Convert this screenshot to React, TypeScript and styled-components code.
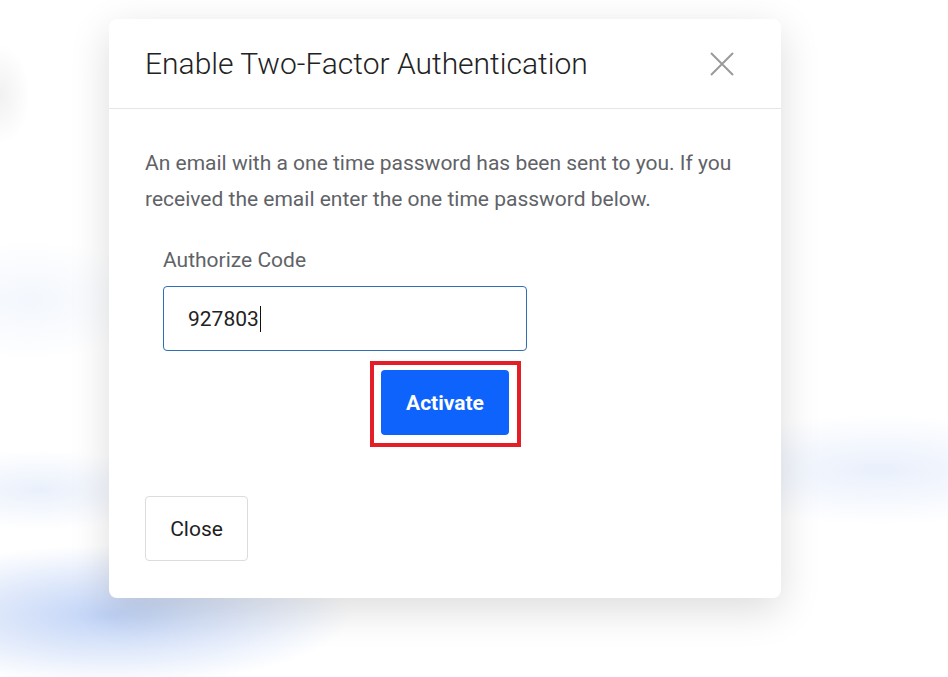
import styled, { createGlobalStyle } from 'styled-components';

const GlobalStyle = createGlobalStyle`
  body {
    margin: 0;
    font-family: Roboto, "Liberation Sans", Arial, sans-serif;
    background: #ffffff;
  }
`;

function App() {
  return (
    <Page>
      <GlobalStyle />
      <Modal>
        <Header>
          <Title>Enable Two-Factor Authentication</Title>
          <CloseIcon aria-label="close">
            <svg width="24" height="24" viewBox="0 0 24 24">
              <path d="M1 1 L23 23 M23 1 L1 23" stroke="#9a9a9a" strokeWidth="2" fill="none" />
            </svg>
          </CloseIcon>
        </Header>
        <Body>
          <Message>
            An email with a one time password has been sent to you. If you received the email enter the one time password
            below.
          </Message>
          <Field>
            <Label>Authorize Code</Label>
            <CodeBox>
              927803
              <Caret />
            </CodeBox>
            <ActionRow>
              <Highlight>
                <PrimaryButton>Activate</PrimaryButton>
              </Highlight>
            </ActionRow>
          </Field>
          <Footer>
            <SecondaryButton>Close</SecondaryButton>
          </Footer>
        </Body>
      </Modal>
    </Page>
  );
}

export default App;

const Page = styled.div`
  width: 948px;
  height: 677px;
  box-sizing: border-box;
  padding: 19px 0 0 109px;
  overflow: hidden;
  background:
    radial-gradient(ellipse 240px 70px at 110px 615px, rgba(188, 208, 246, 0.95), rgba(188, 208, 246, 0) 100%),
    radial-gradient(ellipse 130px 40px at 40px 490px, rgba(225, 234, 250, 0.7), rgba(225, 234, 250, 0) 100%),
    radial-gradient(ellipse 200px 55px at 880px 470px, rgba(228, 236, 251, 0.8), rgba(228, 236, 251, 0) 100%),
    radial-gradient(ellipse 120px 60px at 30px 300px, rgba(235, 241, 251, 0.6), rgba(235, 241, 251, 0) 100%),
    radial-gradient(ellipse 30px 50px at 0px 95px, rgba(215, 215, 215, 0.35), rgba(215, 215, 215, 0) 100%),
    #ffffff;
`;

const Modal = styled.div`
  width: 672px;
  height: 579px;
  display: flex;
  flex-direction: column;
  background: #ffffff;
  border-radius: 8px;
  box-shadow: 0 12px 40px rgba(0, 0, 0, 0.14);
`;

const Header = styled.div`
  height: 90px;
  box-sizing: border-box;
  padding: 0 47px 0 36px;
  display: flex;
  align-items: center;
  justify-content: space-between;
  border-bottom: 1px solid #e6e6e6;
`;

const Title = styled.h2`
  margin: 0;
  font-size: 30px;
  font-weight: 300;
  color: #222222;
`;

const CloseIcon = styled.button`
  width: 24px;
  height: 24px;
  padding: 0;
  border: none;
  background: none;
  display: flex;
  cursor: pointer;
`;

const Body = styled.div`
  flex: 1;
  padding: 36px 36px 0 36px;
  display: flex;
  flex-direction: column;
`;

const Message = styled.p`
  margin: 0;
  font-size: 21px;
  line-height: 36px;
  color: #5f6368;
`;

const Field = styled.div`
  margin: 30px 0 0 18px;
  display: flex;
  flex-direction: column;
`;

const Label = styled.div`
  font-size: 21px;
  line-height: 26px;
  color: #5f6368;
`;

const CodeBox = styled.div`
  margin-top: 13px;
  width: 364px;
  height: 65px;
  box-sizing: border-box;
  padding: 0 24px;
  display: flex;
  align-items: center;
  border: 1px solid #2f6db5;
  border-radius: 4px;
  font-size: 21px;
  color: #222222;
`;

const Caret = styled.span`
  width: 1.5px;
  height: 26px;
  margin-left: 1px;
  background: #111111;
`;

const ActionRow = styled.div`
  margin-top: 10px;
  padding-left: 207px;
  display: flex;
`;

const Highlight = styled.div`
  padding: 5px 8px 8px 7px;
  border: 4px solid #e41e26;
  display: flex;
`;

const PrimaryButton = styled.button`
  width: 128px;
  height: 65px;
  border: none;
  border-radius: 4px;
  background: #0d63fb;
  color: #ffffff;
  font-family: Roboto, "Liberation Sans", Arial, sans-serif;
  font-size: 21px;
  font-weight: 700;
  cursor: pointer;
`;

const Footer = styled.div`
  margin-top: 49px;
  display: flex;
`;

const SecondaryButton = styled.button`
  width: 103px;
  height: 65px;
  border: 1px solid #dcdcdc;
  border-radius: 4px;
  background: #ffffff;
  color: #1e1e1e;
  font-family: Roboto, "Liberation Sans", Arial, sans-serif;
  font-size: 21px;
  font-weight: 400;
  cursor: pointer;
`;
